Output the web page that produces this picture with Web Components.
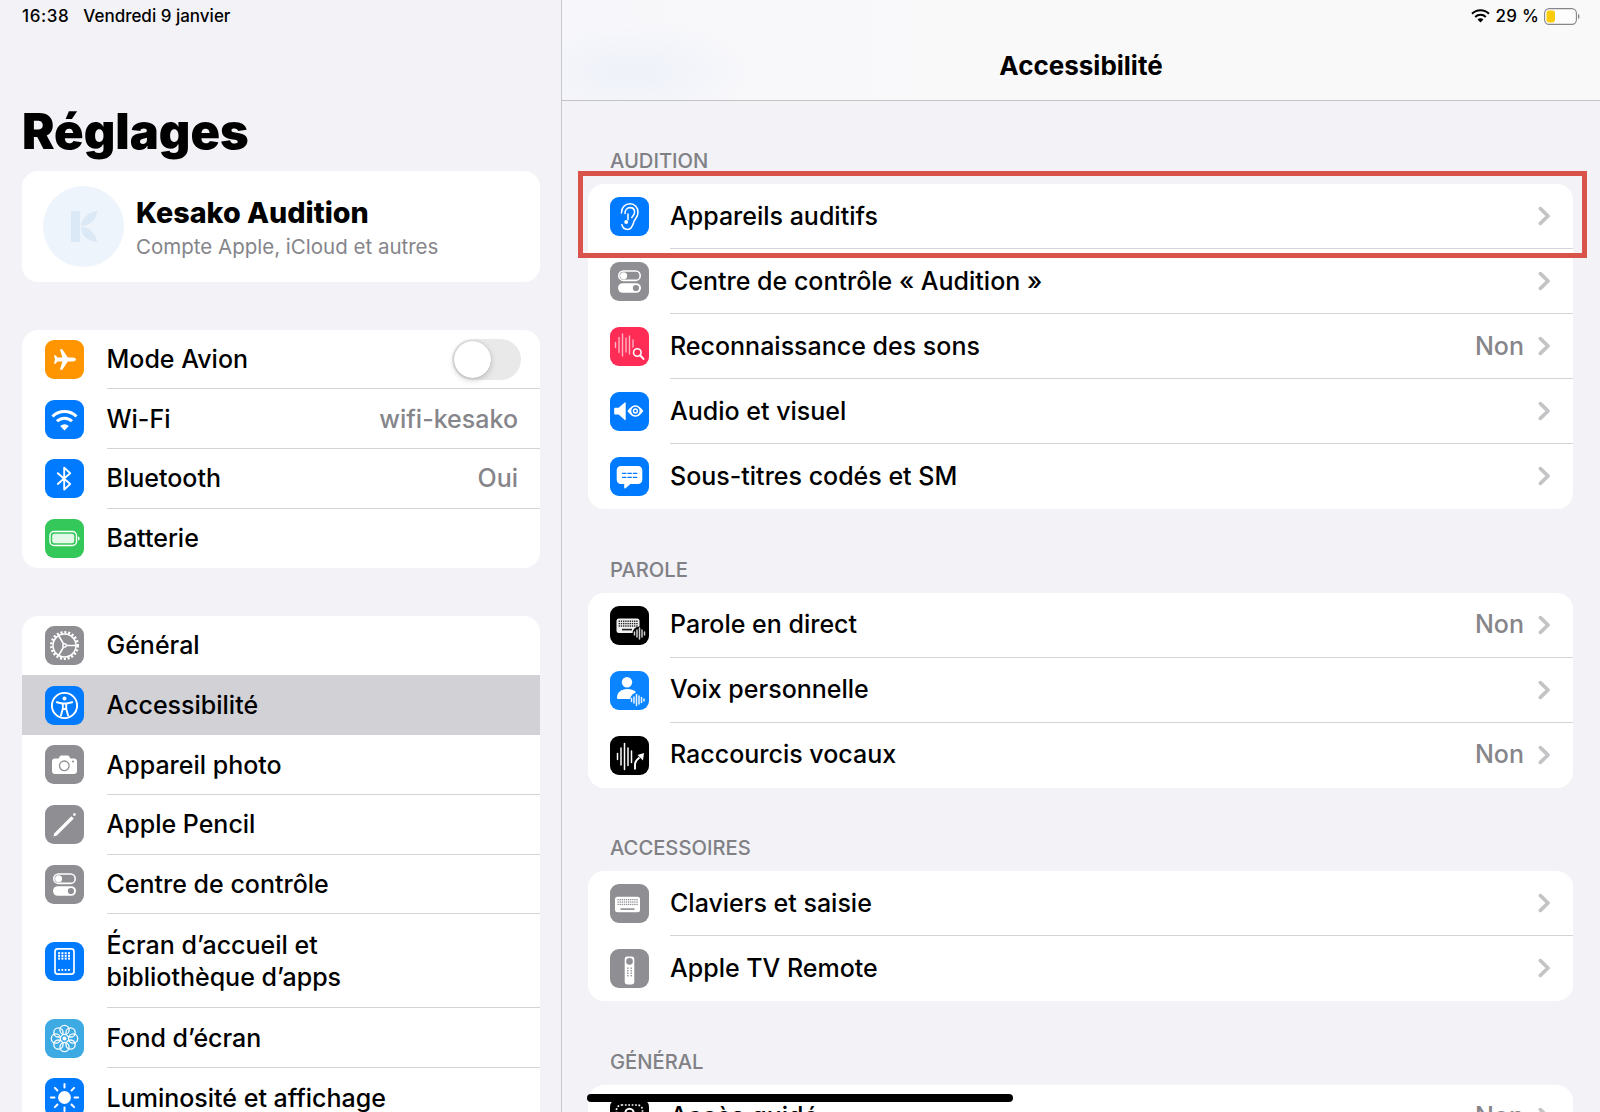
<!DOCTYPE html>
<html lang="fr">
<head>
<meta charset="utf-8">
<title>Réglages</title>
<style>
    html, body { margin: 0; height: 100%; background: #f2f2f7; }
    body { font-family: Inter, "Noto Sans", sans-serif; color: #000; overflow: hidden; }
</style>
</head>
<body>
<settings-split>
    <settings-sidebar slot="sidebar">
        <status-clock></status-clock>
        <large-title>Réglages</large-title>
        <profile-card name="Kesako Audition" detail="Compte Apple, iCloud et autres"></profile-card>
        <settings-group>
            <settings-row icon="plane">Mode Avion<ios-toggle slot="trail"></ios-toggle></settings-row>
            <settings-row icon="wifi">Wi-Fi<span slot="value">wifi-kesako</span></settings-row>
            <settings-row icon="bluetooth">Bluetooth<span slot="value">Oui</span></settings-row>
            <settings-row icon="battery">Batterie</settings-row>
        </settings-group>
        <settings-group>
            <settings-row icon="gear" no-sep>Général</settings-row>
            <settings-row icon="access" selected no-sep>Accessibilité</settings-row>
            <settings-row icon="camera">Appareil photo</settings-row>
            <settings-row icon="pencil">Apple Pencil</settings-row>
            <settings-row icon="controls">Centre de contrôle</settings-row>
            <settings-row icon="tablet" tall>Écran d’accueil et<br>bibliothèque d’apps</settings-row>
            <settings-row icon="flower">Fond d’écran</settings-row>
            <settings-row icon="sun">Luminosité et affichage</settings-row>
        </settings-group>
    </settings-sidebar>

    <settings-detail slot="detail" heading="Accessibilité">
        <settings-group heading="AUDITION">
            <focus-frame slot="overlay"></focus-frame>
            <settings-row icon="ear">Appareils auditifs<row-chevron slot="trail"></row-chevron></settings-row>
            <settings-row icon="controls">Centre de contrôle « Audition »<row-chevron slot="trail"></row-chevron></settings-row>
            <settings-row icon="sound">Reconnaissance des sons<span slot="value">Non</span><row-chevron slot="trail"></row-chevron></settings-row>
            <settings-row icon="audiovisual">Audio et visuel<row-chevron slot="trail"></row-chevron></settings-row>
            <settings-row icon="captions">Sous-titres codés et SM<row-chevron slot="trail"></row-chevron></settings-row>
        </settings-group>
        <settings-group heading="PAROLE">
            <settings-row icon="livespeech">Parole en direct<span slot="value">Non</span><row-chevron slot="trail"></row-chevron></settings-row>
            <settings-row icon="voice">Voix personnelle<row-chevron slot="trail"></row-chevron></settings-row>
            <settings-row icon="shortcut">Raccourcis vocaux<span slot="value">Non</span><row-chevron slot="trail"></row-chevron></settings-row>
        </settings-group>
        <settings-group heading="ACCESSOIRES">
            <settings-row icon="keyboard">Claviers et saisie<row-chevron slot="trail"></row-chevron></settings-row>
            <settings-row icon="remote">Apple TV Remote<row-chevron slot="trail"></row-chevron></settings-row>
        </settings-group>
        <settings-group heading="GÉNÉRAL">
            <settings-row icon="guided">Accès guidé<span slot="value">Non</span><row-chevron slot="trail"></row-chevron></settings-row>
        </settings-group>
    </settings-detail>

    <home-bar slot="overlay"></home-bar>
</settings-split>

<script>
// small helper, every element below is just a shadow root with a style + markup
function shadow(el, html) {
    const root = el.attachShadow({ mode: 'open' });
    const template = document.createElement('template');
    template.innerHTML = html;
    root.appendChild(template.content.cloneNode(true));
    return root;
}

const bars = (list, color, w = 1.3) => list.map(([x, y1, y2]) =>
    `<path d="M${x} ${y1}V${y2}" stroke="${color}" stroke-width="${w}" stroke-linecap="round"/>`).join('');

const keyDots = (x0, y0, cols, rows, stepX, stepY, color, s = 1.2) => {
    let out = '';
    for (let r = 0; r < rows; r++) {
        for (let c = 0; c < cols; c++) {
            out += `<rect x="${x0 + c * stepX}" y="${y0 + r * stepY}" width="${s}" height="${s}" fill="${color}"/>`;
        }
    }
    return out;
};

const flowerPetals = () => {
    let out = '';
    for (let i = 0; i < 8; i++) {
        const a = i * Math.PI / 4;
        out += `<circle cx="${19.5 + 8.6 * Math.cos(a)}" cy="${19.5 + 8.6 * Math.sin(a)}" r="4.6" fill="none" stroke="#fff" stroke-width="1.3"/>`;
    }
    return out;
};

const sunRays = () => {
    let out = '';
    for (let i = 0; i < 8; i++) {
        const a = i * Math.PI / 4;
        const c = Math.cos(a), s = Math.sin(a);
        out += `<path d="M${19.5 + 10 * c} ${19.5 + 10 * s}L${19.5 + 13.6 * c} ${19.5 + 13.6 * s}" stroke="#fff" stroke-width="2" stroke-linecap="round"/>`;
    }
    return out;
};

const ICONS = {
    plane: ['#ff9500', `<path fill="#fff" d="M31 19.5c0-1.1-1.6-1.9-3.2-1.9h-5l-5.5-8.3h-2.4l2.5 8.3h-5l-1.8-2.4H9l1 4.3-1 4.3h1.6l1.8-2.4h5l-2.5 8.3h2.4l5.5-8.3h5c1.6 0 3.2-.8 3.2-1.9z"/>`],
    wifi: ['#007aff', `<g fill="none" stroke="#fff" stroke-width="3"><path d="M7.5 16.5a17 17 0 0 1 24 0"/><path d="M12 21.3a10.5 10.5 0 0 1 15 0"/></g><path fill="#fff" d="M19.5 30.5l-4.3-4.4a6 6 0 0 1 8.6 0z"/>`],
    bluetooth: ['#007aff', `<path fill="none" stroke="#fff" stroke-width="1.9" stroke-linejoin="round" stroke-linecap="round" d="M12.8 14.2L25.2 25l-6 5.6V8.6l6 5.6L12.8 25"/>`],
    battery: ['#34c759', `<rect x="5" y="12.5" width="26.5" height="14" rx="4" fill="none" stroke="#fff" stroke-width="1.4"/><rect x="7.2" y="14.7" width="22" height="9.6" rx="2.2" fill="#e4f8e9"/><path d="M33 17.5c1 .4 1.6 1.1 1.6 2s-.6 1.6-1.6 2z" fill="#fff"/>`],
    gear: ['#8e8e93', `<circle cx="19.5" cy="19.5" r="13.2" fill="none" stroke="#fff" stroke-width="2.6" stroke-dasharray="2.1 1.75"/><circle cx="19.5" cy="19.5" r="11.5" fill="none" stroke="#fff" stroke-width="1.5"/><g stroke="#fff" stroke-width="1.5" fill="none"><circle cx="19.5" cy="19.5" r="1.7"/><path d="M21.2 19.5H31M18.6 18L13.6 9.5M18.6 21L13.6 29.5"/></g>`],
    access: ['#007aff', `<circle cx="19.5" cy="19.5" r="12.6" fill="none" stroke="#fff" stroke-width="1.9"/><circle cx="19.5" cy="12.6" r="2" fill="#fff"/><path fill="none" stroke="#fff" stroke-width="1.9" stroke-linecap="round" stroke-linejoin="round" d="M11.8 16.2l5.6 1.3h4.2l5.6-1.3M17.8 17.8v5l-1.9 6.6M21.2 17.8v5l1.9 6.6M17.8 23h3.4"/>`],
    camera: ['#8e8e93', `<path fill="#fff" d="M10 13.5h3.6l1.3-2.2c.3-.5.7-.7 1.2-.7h6.8c.5 0 .9.2 1.2.7l1.3 2.2H29c1.8 0 3 1.2 3 3V26c0 1.8-1.2 3-3 3H10c-1.8 0-3-1.2-3-3v-9.5c0-1.8 1.2-3 3-3z"/><circle cx="19.3" cy="20.8" r="4.8" fill="none" stroke="#8e8e93" stroke-width="1.3"/><circle cx="28" cy="16.4" r="1" fill="#8e8e93"/>`],
    pencil: ['#8e8e93', `<path fill="#fff" d="M8.4 31.6l1-3.4L26.4 11.2l2.4 2.4L11.8 30.6z"/><path stroke="#fff" stroke-width="2.6" stroke-linecap="round" d="M29.3 9.7l.2-.2"/>`],
    controls: ['#8e8e93', `<rect x="8.8" y="9" width="21.4" height="9.4" rx="4.7" fill="none" stroke="#fff" stroke-width="1.6"/><circle cx="13.6" cy="13.7" r="3.5" fill="#fff"/><rect x="8" y="21.2" width="23" height="9.6" rx="4.8" fill="#fff"/><circle cx="25.9" cy="26" r="3.1" fill="#8e8e93"/>`],
    tablet: ['#007aff', `<rect x="10" y="6.8" width="19" height="25.4" rx="2.6" fill="none" stroke="#fff" stroke-width="1.7"/>${keyDots(13.1, 10.2, 4, 3, 3.3, 2.7, '#fff', 2)}${keyDots(13.1, 27, 4, 1, 3.3, 0, '#fff', 1.8)}`],
    flower: ['#3eaae4', `${flowerPetals()}<circle cx="19.5" cy="19.5" r="2" fill="#fff"/>`],
    sun: ['#007aff', `<circle cx="19.5" cy="19.5" r="6.4" fill="#fff"/>${sunRays()}`],
    ear: ['#007aff', `<g fill="none" stroke="#fff" stroke-width="1.55" stroke-linecap="round"><path d="M11.4 16C11.4 10.4 15.2 6.8 20 6.8 24.8 6.8 28 10.4 28 15.2c0 4.6-2.6 6.2-3.8 8.8-1.3 2.9-1.6 8.4-6.6 8.4-2.8 0-5-1.7-5.7-4.6"/><path d="M15 16.4c0-3.4 2.2-5.8 5-5.8 2.8 0 4.6 2 4.6 4.6 0 2.6-1.8 3.6-2.8 5.4"/><path d="M18 17v5.5"/></g><circle cx="16.2" cy="25" r="2" fill="#fff"/>`],
    sound: ['#ff2d55', `${bars([[5.5, 15.5, 20.5], [9, 10.5, 25.5], [12.5, 7, 29], [16, 11, 25], [19.5, 9, 27], [23, 13, 23]], '#ffb3c3', 1.4)}<circle cx="27.3" cy="25.5" r="6.6" fill="#ff2d55"/><circle cx="27.3" cy="25.5" r="3.8" fill="none" stroke="#fff" stroke-width="1.6"/><path d="M30.1 28.3l3.4 3.6" stroke="#fff" stroke-width="2" stroke-linecap="round"/>`],
    audiovisual: ['#007aff', `<path fill="#fff" d="M5 15.8h3.6l6.2-5.4c.4-.3.9-.1.9.4v16.8c0 .5-.5.7-.9.4l-6.2-5.4H5c-.5 0-.8-.3-.8-.8v-5.2c0-.5.3-.8.8-.8z"/><path fill="#fff" d="M17.4 19c2.6-4 5.6-5.8 8-5.8s5.4 1.8 8 5.8c-2.6 4-5.6 5.8-8 5.8s-5.4-1.8-8-5.8z"/><circle cx="25.4" cy="19" r="3.4" fill="none" stroke="#007aff" stroke-width="1.5"/><circle cx="25.4" cy="19" r="1.2" fill="#007aff"/>`],
    captions: ['#007aff', `<path fill="#fff" d="M11 9h17c2.6 0 4.3 1.7 4.3 4.3v9.4c0 2.6-1.7 4.3-4.3 4.3h-7.5l-5 4.3c-.6.5-1.3.2-1.3-.6V27H11c-2.6 0-4.3-1.7-4.3-4.3v-9.4C6.7 10.7 8.4 9 11 9z"/><path stroke="#007aff" stroke-width="1.2" stroke-dasharray="4.4 1" d="M12 16.4h15.2M12 20.4h15.2"/>`],
    livespeech: ['#000', `<rect x="6.5" y="12.5" width="23" height="14.5" rx="2.5" fill="#f2f2f2"/>${keyDots(8.6, 14.5, 9, 3, 2.2, 2.4, '#222', 1.4)}<rect x="12" y="22.8" width="10" height="1.6" fill="#222"/><circle cx="29.5" cy="27.5" r="7" fill="#000"/>${bars([[24.5, 26, 29], [27, 24, 31], [29.5, 22, 33], [32, 24, 31], [34.5, 26, 29]], '#cfcfcf', 1.5)}`],
    voice: ['#0a84ff', `<circle cx="17" cy="11.2" r="5.2" fill="#fff"/><path fill="#fff" d="M7 26.5c0-5 4.5-8.5 10-8.5 4 0 6.5 1 8.5 2.8V28H8.5C7.5 28 7 27.5 7 26.5z"/><circle cx="27.5" cy="29" r="7.5" fill="#0a84ff"/>${bars([[21.5, 27.5, 30.5], [24, 26, 32], [26.5, 23.5, 34.5], [29, 25, 33], [31.5, 26.5, 31.5], [34, 28, 30]], '#eaf4ff', 1.5)}`],
    shortcut: ['#000', `${bars([[7.5, 17.5, 23.5], [11, 12, 29], [14.5, 7.5, 33.5], [18, 12, 29.5], [21.5, 15, 26.5]], '#fff', 1.5)}<path fill="none" stroke="#fff" stroke-width="1.9" d="M25 33.5v-5c0-2.8 1.5-4.8 4.5-7"/><path fill="#fff" d="M34 17l-1 7.5-5.500-5.600z"/>`],
    keyboard: ['#8e8e93', `<rect x="5" y="12.8" width="25" height="15.5" rx="2.5" fill="#fff"/>${keyDots(7.5, 15, 10, 3, 2.1, 2.4, '#8e8e93', 1.3)}<rect x="10.5" y="24.3" width="14" height="1.6" fill="#8e8e93"/>`],
    remote: ['#8e8e93', `<rect x="14.7" y="7.5" width="9.6" height="28" rx="2.4" fill="#fff"/><circle cx="19.5" cy="12.4" r="3.3" fill="#8e8e93"/>${keyDots(17.1, 18.5, 2, 4, 3.4, 2.5, '#8e8e93', 1.4)}`],
    guided: ['#000', `<rect x="6.5" y="7" width="26" height="25" rx="5" fill="none" stroke="#fff" stroke-width="1.7" stroke-dasharray="1.7 1.7"/><circle cx="19.5" cy="15" r="4.2" fill="none" stroke="#fff" stroke-width="2"/>`]
};

class SettingsSplit extends HTMLElement {
    constructor() {
        super();
        shadow(this, `
            <style>
                :host { display: grid; grid-template-columns: 562px 1fr; width: 1600px; height: 1112px; position: relative; overflow: hidden; background: #f2f2f7; }
                .side { border-right: 1px solid #c8c8cc; overflow: hidden; min-width: 0; }
                .main { overflow: hidden; min-width: 0; }
            </style>
            <div class="side"><slot name="sidebar"></slot></div>
            <div class="main"><slot name="detail"></slot></div>
            <slot name="overlay"></slot>
        `);
    }
}

class SettingsSidebar extends HTMLElement {
    constructor() {
        super();
        shadow(this, `
            <style>
                :host { display: block; padding: 0 21px 0 22px; --row-h: 59.7px; --row-left: 23px; --icon-gap: 22.5px; --row-right: 22px; --text-nudge: 1px; }
                ::slotted(settings-group) { margin-top: 47.5px; }
            </style>
            <slot></slot>
        `);
    }
}

class SettingsDetail extends HTMLElement {
    constructor() {
        super();
        shadow(this, `
            <style>
                :host { display: block; --row-h: 65px; --row-left: 21.5px; --icon-gap: 21.5px; --row-right: 22px; }
                .head {
                    height: 100px; border-bottom: 1px solid #c4c4c7;
                    background:
                        radial-gradient(120px 50px at 70px 72px, #eef1f9, transparent),
                        linear-gradient(90deg, #f7f7fb, #f9f9fa 40%, #f9f9fa);
                    display: flex; flex-direction: column;
                }
                .top { height: 32px; display: flex; justify-content: flex-end; align-items: center; padding-right: 20px; }
                h1 { margin: 0; font-size: 26px; font-weight: 700; line-height: 68px; text-align: center; height: 68px; }
                .body { padding: 48px 27px 0 26px; }
                ::slotted(settings-group) { margin-top: 48.5px; }
                ::slotted(settings-group:first-child) { margin-top: 0; }
            </style>
            <div class="head">
                <div class="top"><status-icons></status-icons></div>
                <h1>${this.getAttribute('heading')}</h1>
            </div>
            <div class="body"><slot></slot></div>
        `);
    }
}

class StatusClock extends HTMLElement {
    constructor() {
        super();
        shadow(this, `
            <style>
                :host { display: flex; gap: 14px; height: 32px; align-items: center; font-size: 17px; font-weight: 500; }
                .time { letter-spacing: .6px; }
            </style>
            <span class="time">16:38</span><span>Vendredi 9 janvier</span>
        `);
    }
}

class StatusIcons extends HTMLElement {
    constructor() {
        super();
        shadow(this, `
            <style>
                :host { display: flex; align-items: center; font-size: 17px; font-weight: 500; }
                span { margin: 0 5px 0 6px; letter-spacing: .2px; }
                svg { display: block; }
            </style>
            <svg width="19" height="14" viewBox="0 0 19 14"><g fill="none" stroke="#000" stroke-width="2"><path d="M1 4.8a12 12 0 0 1 17 0"/><path d="M4.2 8a7.5 7.5 0 0 1 10.6 0"/></g><path d="M9.5 13.5L6.6 10.6a4 4 0 0 1 5.8 0z"/></svg>
            <span>29 %</span>
            <svg width="36" height="17" viewBox="0 0 36 17"><rect x=".6" y=".6" width="31.8" height="15.8" rx="4.6" fill="#fff" fill-opacity=".6" stroke="#85858a" stroke-width="1.1"/><rect x="2.5" y="2.5" width="8.5" height="12" rx="2.4" fill="#fbcb0a"/><path d="M34 6c.9.3 1.4 1.2 1.4 2.5S34.9 10.7 34 11z" fill="#85858a"/></svg>
        `);
    }
}

class LargeTitle extends HTMLElement {
    constructor() {
        super();
        shadow(this, `
            <style>
                :host { display: block; font-size: 48.8px; font-weight: 900; line-height: 56px; margin-top: 72px; height: 67px; }
            </style>
            <slot></slot>
        `);
    }
}

class ProfileCard extends HTMLElement {
    constructor() {
        super();
        shadow(this, `
            <style>
                :host { display: flex; align-items: center; height: 111px; background: #fff; border-radius: 16px; padding-left: 21px; gap: 12px; }
                .avatar { width: 81px; height: 81px; flex: none; display: block; }
                .text { padding-top: 2px; }
                .name { font-size: 28.7px; font-weight: 800; line-height: 34px; }
                .detail { font-size: 20.5px; font-weight: 400; color: #85858a; line-height: 26px; margin-top: 4px; }
            </style>
            <svg class="avatar" viewBox="0 0 81 81">
                <circle cx="40.5" cy="40.5" r="40.5" fill="#eef4fb"/>
                <rect x="28" y="25" width="9" height="31" fill="#dbe8f5"/>
                <path d="M38 40C38 32 46 26 54 25 54 33 47 40 38 40z" fill="#dbe8f5"/>
                <path d="M38 41C47 41 53 48 54 56 45 55 38 50 38 41z" fill="#dbe8f5"/>
            </svg>
            <div class="text">
                <div class="name">${this.getAttribute('name')}</div>
                <div class="detail">${this.getAttribute('detail')}</div>
            </div>
        `);
    }
}

class SettingsGroup extends HTMLElement {
    constructor() {
        super();
        const heading = this.getAttribute('heading');
        shadow(this, `
            <style>
                :host { display: block; position: relative; }
                .label { font-size: 20.2px; font-weight: 500; line-height: 24px; color: #808085; padding-left: 22px; margin-bottom: 11px; }
                .wrap { position: relative; }
                .card { background: #fff; border-radius: 16px; overflow: hidden; }
            </style>
            ${heading ? `<div class="label">${heading}</div>` : ''}
            <div class="wrap">
                <div class="card"><slot></slot></div>
                <slot name="overlay"></slot>
            </div>
        `);
    }
}

class SettingsRow extends HTMLElement {
    constructor() {
        super();
        shadow(this, `
            <style>
                :host { display: flex; align-items: stretch; min-height: var(--row-h); padding-left: var(--row-left); font-size: 25px; font-weight: 450; line-height: 32.5px; }
                :host([selected]) { background: #d1d1d6; }
                :host([tall]) { min-height: 94.2px; }
                row-icon { align-self: center; margin-right: var(--icon-gap); }
                .body { flex: 1; min-width: 0; display: flex; align-items: center; padding-right: var(--row-right); padding-top: var(--text-nudge, 0); border-bottom: 1px solid #d4d4d8; }
                :host(:last-child) .body, :host([no-sep]) .body { border-bottom-color: transparent; }
                .label { flex: 1; min-width: 0; }
                .value { color: #85858a; }
            </style>
            <row-icon name="${this.getAttribute('icon')}"></row-icon>
            <div class="body">
                <div class="label"><slot></slot></div>
                <div class="value"><slot name="value"></slot></div>
                <slot name="trail"></slot>
            </div>
        `);
    }
}

class RowIcon extends HTMLElement {
    constructor() {
        super();
        const [color, art] = ICONS[this.getAttribute('name')];
        shadow(this, `
            <style>
                :host { display: block; width: 39px; height: 39px; flex: none; border-radius: 9px; overflow: hidden; background: ${color}; }
                svg { display: block; }
            </style>
            <svg width="39" height="39" viewBox="0 0 39 39">${art}</svg>
        `);
    }
}

class RowChevron extends HTMLElement {
    constructor() {
        super();
        shadow(this, `
            <style>
                :host { display: block; margin-left: 14px; width: 13px; height: 20px; }
                svg { display: block; }
            </style>
            <svg width="13" height="20" viewBox="0 0 13 20"><path d="M2.4 2.6L10 10l-7.6 7.4" fill="none" stroke="#c4c4c7" stroke-width="3.7" stroke-linecap="round" stroke-linejoin="round"/></svg>
        `);
    }
}

class IosToggle extends HTMLElement {
    constructor() {
        super();
        shadow(this, `
            <style>
                :host { display: block; position: relative; width: 69px; height: 41px; border-radius: 21px; background: #e9e9ea; margin-right: -3px; }
                i { position: absolute; left: 2px; top: 2px; width: 37px; height: 37px; border-radius: 50%; background: #fff; box-shadow: 0 2px 6px rgba(0, 0, 0, .2), 0 0 1px rgba(0, 0, 0, .25); }
            </style>
            <i></i>
        `);
    }
}

class FocusFrame extends HTMLElement {
    constructor() {
        super();
        shadow(this, `
            <style>
                :host { position: absolute; left: -10px; top: -13px; width: 1009px; height: 87px; box-sizing: border-box; border: 5px solid #d9534a; pointer-events: none; }
            </style>
        `);
    }
}

class HomeBar extends HTMLElement {
    constructor() {
        super();
        shadow(this, `
            <style>
                :host { position: absolute; left: 587px; top: 1094px; width: 426px; height: 7.5px; border-radius: 4px; background: #000; }
            </style>
        `);
    }
}

customElements.define('row-icon', RowIcon);
customElements.define('row-chevron', RowChevron);
customElements.define('ios-toggle', IosToggle);
customElements.define('status-clock', StatusClock);
customElements.define('status-icons', StatusIcons);
customElements.define('large-title', LargeTitle);
customElements.define('profile-card', ProfileCard);
customElements.define('focus-frame', FocusFrame);
customElements.define('home-bar', HomeBar);
customElements.define('settings-row', SettingsRow);
customElements.define('settings-group', SettingsGroup);
customElements.define('settings-sidebar', SettingsSidebar);
customElements.define('settings-detail', SettingsDetail);
customElements.define('settings-split', SettingsSplit);
</script>
</body>
</html>
